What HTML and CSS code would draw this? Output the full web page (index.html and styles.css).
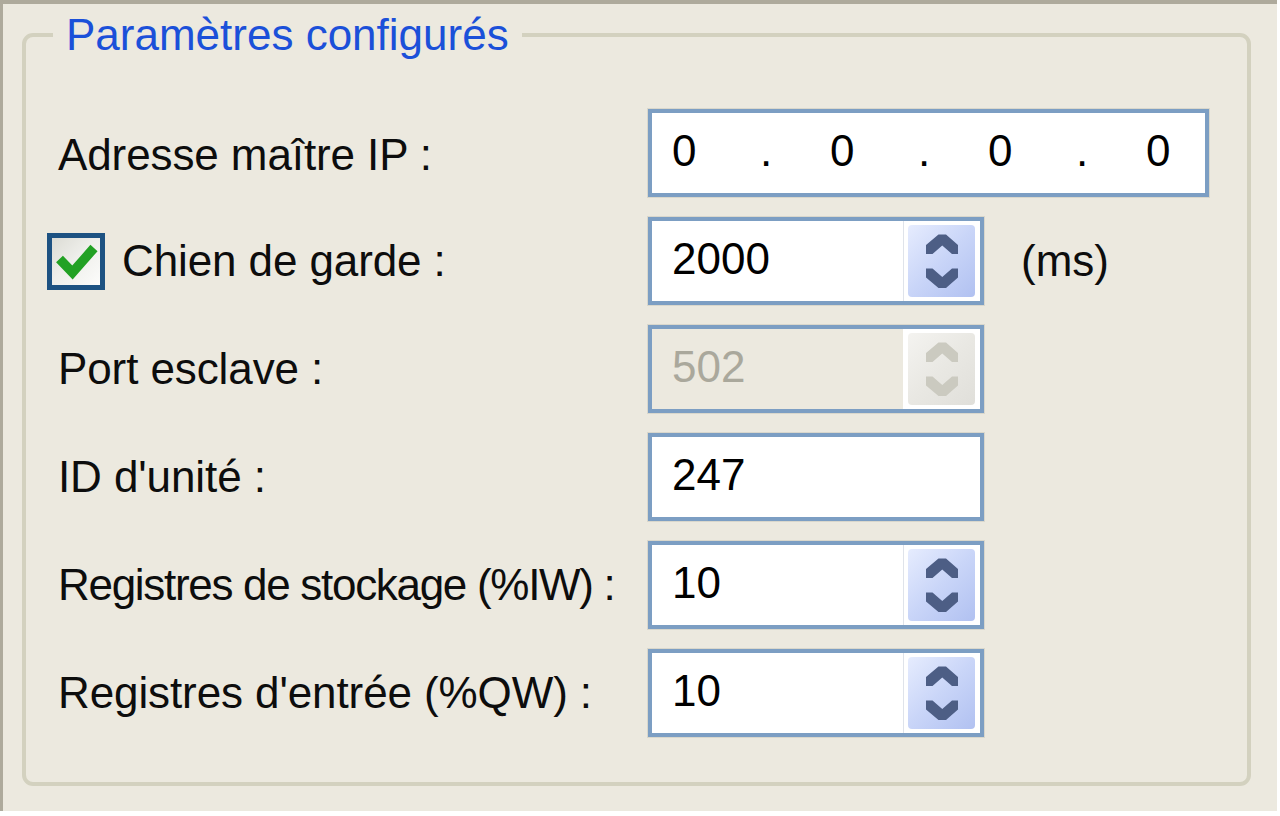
FILE: index.html
```html
<!DOCTYPE html>
<html lang="fr">
<head>
<meta charset="utf-8">
<title>Paramètres configurés</title>
<link rel="stylesheet" href="styles.css">
</head>
<body>
<div class="frame">
  <fieldset class="group">
    <legend class="title">Paramètres configurés</legend>
    <div class="form">
      <div class="label label-ip">Adresse maître IP :</div>
      <div class="control">
        <div class="field ip">
          <span class="oct">0</span><span class="dot">.</span>
          <span class="oct">0</span><span class="dot">.</span>
          <span class="oct">0</span><span class="dot">.</span>
          <span class="oct">0</span>
        </div>
      </div>

      <div class="label check-label">
        <span class="checkbox">
          <svg viewBox="0 0 48 47" width="48" height="47"><polyline points="7.5,21 20.5,34.5 42,10" fill="none" stroke="#22a124" stroke-width="9.5" stroke-linejoin="miter"/></svg>
        </span>
        <span>Chien de garde :</span>
      </div>
      <div class="control">
        <div class="field spin">
          <span class="val">2000</span>
          <div class="btnwrap">
            <div class="btn">
              <svg viewBox="0 0 67 72" width="67" height="72"><polygon points="18,20 30.5,9.5 38,9.5 50,20 50,29 44,29 34.25,20.5 24.5,29 18,29"/><polygon points="18,43.5 24.5,43.5 34.25,52 44,43.5 50,43.5 50,52.5 38,63 30.5,63 18,52.5"/></svg>
            </div>
          </div>
        </div>
        <span class="unit">(ms)</span>
      </div>

      <div class="label">Port esclave :</div>
      <div class="control">
        <div class="field spin disabled">
          <span class="val">502</span>
          <div class="btnwrap">
            <div class="btn">
              <svg viewBox="0 0 67 72" width="67" height="72"><polygon points="18,20 30.5,9.5 38,9.5 50,20 50,29 44,29 34.25,20.5 24.5,29 18,29"/><polygon points="18,43.5 24.5,43.5 34.25,52 44,43.5 50,43.5 50,52.5 38,63 30.5,63 18,52.5"/></svg>
            </div>
          </div>
        </div>
      </div>

      <div class="label">ID d'unité :</div>
      <div class="control">
        <div class="field plain">
          <span class="val">247</span>
        </div>
      </div>

      <div class="label label-tight">Registres de stockage (%IW) :</div>
      <div class="control">
        <div class="field spin">
          <span class="val">10</span>
          <div class="btnwrap">
            <div class="btn">
              <svg viewBox="0 0 67 72" width="67" height="72"><polygon points="18,20 30.5,9.5 38,9.5 50,20 50,29 44,29 34.25,20.5 24.5,29 18,29"/><polygon points="18,43.5 24.5,43.5 34.25,52 44,43.5 50,43.5 50,52.5 38,63 30.5,63 18,52.5"/></svg>
            </div>
          </div>
        </div>
      </div>

      <div class="label">Registres d'entrée (%QW) :</div>
      <div class="control">
        <div class="field spin">
          <span class="val">10</span>
          <div class="btnwrap">
            <div class="btn">
              <svg viewBox="0 0 67 72" width="67" height="72"><polygon points="18,20 30.5,9.5 38,9.5 50,20 50,29 44,29 34.25,20.5 24.5,29 18,29"/><polygon points="18,43.5 24.5,43.5 34.25,52 44,43.5 50,43.5 50,52.5 38,63 30.5,63 18,52.5"/></svg>
            </div>
          </div>
        </div>
      </div>
    </div>
  </fieldset>
</div>
</body>
</html>
```

FILE: styles.css
```css
html, body {
  margin: 0;
  padding: 0;
  background: #ffffff;
}

body {
  font-family: "Liberation Sans", Arial, sans-serif;
  font-size: 44px;
  color: #0d0d0d;
}

.frame {
  width: 1277px;
  height: 811px;
  box-sizing: border-box;
  background: #ece9df;
  border-top: 4px solid #aeaa9c;
  border-left: 3px solid #aeaa9c;
  padding: 6px 26px 25px 19px;
  display: flex;
  flex-direction: column;
}

.group {
  flex: 1;
  margin: 0;
  min-width: 0;
  border: 4px solid #d3d1bf;
  border-radius: 11px;
  padding: 49px 0 0 32px;
}

.title {
  margin-left: -5px;
  padding: 0 13px;
  font-size: 44px;
  line-height: 50px;
  color: #1b50d9;
}

.form {
  display: grid;
  grid-template-columns: 590px auto;
  grid-auto-rows: 88px;
  row-gap: 20px;
  align-items: center;
}

.label {
  display: flex;
  align-items: center;
  white-space: nowrap;
  letter-spacing: -0.1px;
}

.label-ip {
  padding-top: 4px;
}

.label-tight {
  letter-spacing: -1.3px;
}

.check-label {
  margin-left: -11px;
  gap: 17px;
}

.checkbox {
  width: 58px;
  height: 57px;
  box-sizing: border-box;
  border: 5px solid #1d5282;
  background: linear-gradient(135deg, #dcdcd5 0%, #eeeeea 45%, #fcfcfb 100%);
  display: flex;
}

.checkbox svg {
  display: block;
}

.control {
  display: flex;
  align-items: center;
  height: 88px;
}

.field {
  height: 88px;
  box-sizing: border-box;
  border: 4px solid #7c9ec3;
  background: #ffffff;
  box-shadow: 0 0 0 1px #d9d7cc;
  display: flex;
  align-items: center;
  color: #000;
}

.ip {
  width: 561px;
  padding: 0 0 4px 20px;
}

.oct {
  flex: 0 0 88px;
}

.dot {
  flex: 0 0 70px;
}

.spin, .plain {
  width: 336px;
}

.val {
  flex: 1;
  padding: 0 0 4px 20px;
}

.btnwrap {
  align-self: stretch;
  display: flex;
  border-left: 1px solid #dfe3ea;
  padding: 4px 5px 4px 4px;
}

.btn {
  width: 67px;
  height: 72px;
  border-radius: 4px;
  background: linear-gradient(135deg, #e6ecfe 0%, #c9d5f8 50%, #b1c1f1 100%);
  display: flex;
}

.btn svg {
  display: block;
  fill: #4d5e85;
}

.disabled {
  background: #ece9df;
  color: #aaa89c;
}

.disabled .btnwrap {
  background: #ffffff;
  border-left-color: #ffffff;
}

.disabled .btn {
  background: linear-gradient(135deg, #f4f3f0 0%, #e9e8e3 50%, #e0dfda 100%);
}

.disabled .btn svg {
  fill: #cbcac0;
}

.unit {
  margin-left: 37px;
}
```
